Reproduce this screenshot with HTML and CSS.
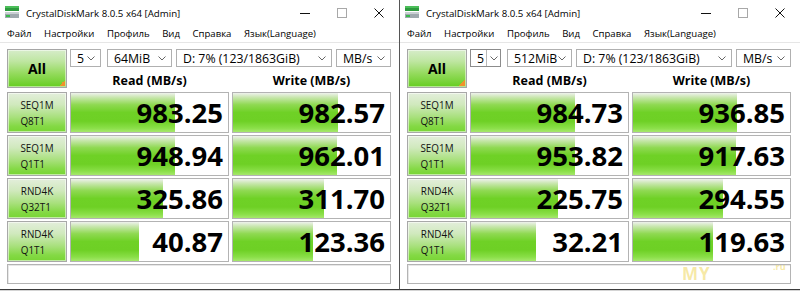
FILE: index.html
```html
<!DOCTYPE html>
<html lang="ru">
    <head>
        <meta charset="UTF-8">
        <title>CrystalDiskMark</title>
        <link rel="stylesheet" href="styles.css">
    </head>
    <body>
        <div class="window window-left">
            <div class="titlebar">
                <svg class="app-icon" width="14" height="12" viewBox="0 0 14 12">
                    <rect x="0" y="0" width="14" height="5" fill="#2e9a3e"/>
                    <rect x="0" y="0" width="14" height="2" fill="#4cbf5a"/>
                    <rect x="0" y="6" width="14" height="6" fill="#9fa9ae"/>
                    <rect x="0" y="6" width="14" height="2" fill="#c9d0d3"/>
                    <rect x="1" y="9" width="4" height="2" fill="#3cb84e"/>
                </svg>
                <span class="title">CrystalDiskMark 8.0.5 x64 [Admin]</span>
                <div class="caption">
                    <span class="cap-btn"><svg width="10" height="10" viewBox="0 0 10 10"><line x1="0" y1="5.5" x2="10" y2="5.5" stroke="#111"/></svg></span>
                    <span class="cap-btn"><svg width="10" height="10" viewBox="0 0 10 10"><rect x="0.5" y="0.5" width="9" height="9" fill="none" stroke="#a8a8a8"/></svg></span>
                    <span class="cap-btn"><svg width="10" height="10" viewBox="0 0 10 10"><path d="M0.5 0.5 L9.5 9.5 M9.5 0.5 L0.5 9.5" stroke="#111"/></svg></span>
                </div>
            </div>
            <div class="menubar">
                <span>Файл</span><span>Настройки</span><span>Профиль</span><span>Вид</span><span>Справка</span><span>Язык(Language)</span>
            </div>
            <div class="board">
                <div class="all-btn">All</div>
                <div class="selects">
                    <div class="combo combo-count">5<svg width="8" height="5" viewBox="0 0 8 5"><polyline points="0.5,0.5 4,4 7.5,0.5" fill="none" stroke="#666"/></svg></div>
                    <div class="combo combo-size">64MiB<svg width="8" height="5" viewBox="0 0 8 5"><polyline points="0.5,0.5 4,4 7.5,0.5" fill="none" stroke="#666"/></svg></div>
                    <div class="combo combo-drive">D: 7% (123/1863GiB)<svg width="8" height="5" viewBox="0 0 8 5"><polyline points="0.5,0.5 4,4 7.5,0.5" fill="none" stroke="#666"/></svg></div>
                    <div class="combo combo-unit">MB/s<svg width="8" height="5" viewBox="0 0 8 5"><polyline points="0.5,0.5 4,4 7.5,0.5" fill="none" stroke="#666"/></svg></div>
                </div>
                <div class="col-head">Read (MB/s)</div>
                <div class="col-head">Write (MB/s)</div>

                <div class="test-label">SEQ1M<br>Q8T1</div>
                <div class="meter"><div class="fill" style="width:104px"></div><span class="value">983.25</span></div>
                <div class="meter"><div class="fill" style="width:105px"></div><span class="value">982.57</span></div>

                <div class="test-label">SEQ1M<br>Q1T1</div>
                <div class="meter"><div class="fill" style="width:104px"></div><span class="value">948.94</span></div>
                <div class="meter"><div class="fill" style="width:104px"></div><span class="value">962.01</span></div>

                <div class="test-label">RND4K<br>Q32T1</div>
                <div class="meter"><div class="fill" style="width:92px"></div><span class="value">325.86</span></div>
                <div class="meter"><div class="fill" style="width:91px"></div><span class="value">311.70</span></div>

                <div class="test-label">RND4K<br>Q1T1</div>
                <div class="meter"><div class="fill" style="width:68px"></div><span class="value">40.87</span></div>
                <div class="meter"><div class="fill" style="width:80px"></div><span class="value">123.36</span></div>

                <div class="status"></div>
            </div>
        </div>

        <div class="window window-right">
            <div class="titlebar">
                <svg class="app-icon" width="14" height="12" viewBox="0 0 14 12">
                    <rect x="0" y="0" width="14" height="5" fill="#2e9a3e"/>
                    <rect x="0" y="0" width="14" height="2" fill="#4cbf5a"/>
                    <rect x="0" y="6" width="14" height="6" fill="#9fa9ae"/>
                    <rect x="0" y="6" width="14" height="2" fill="#c9d0d3"/>
                    <rect x="1" y="9" width="4" height="2" fill="#3cb84e"/>
                </svg>
                <span class="title">CrystalDiskMark 8.0.5 x64 [Admin]</span>
                <div class="caption">
                    <span class="cap-btn"><svg width="10" height="10" viewBox="0 0 10 10"><line x1="0" y1="5.5" x2="10" y2="5.5" stroke="#111"/></svg></span>
                    <span class="cap-btn"><svg width="10" height="10" viewBox="0 0 10 10"><rect x="0.5" y="0.5" width="9" height="9" fill="none" stroke="#a8a8a8"/></svg></span>
                    <span class="cap-btn"><svg width="10" height="10" viewBox="0 0 10 10"><path d="M0.5 0.5 L9.5 9.5 M9.5 0.5 L0.5 9.5" stroke="#111"/></svg></span>
                </div>
            </div>
            <div class="menubar">
                <span>Файл</span><span>Настройки</span><span>Профиль</span><span>Вид</span><span>Справка</span><span>Язык(Language)</span>
            </div>
            <div class="board">
                <div class="all-btn">All</div>
                <div class="selects">
                    <div class="combo combo-count hot">5<span class="drop"><svg width="8" height="5" viewBox="0 0 8 5"><polyline points="0.5,0.5 4,4 7.5,0.5" fill="none" stroke="#666"/></svg></span></div>
                    <div class="combo combo-size">512MiB<svg width="8" height="5" viewBox="0 0 8 5"><polyline points="0.5,0.5 4,4 7.5,0.5" fill="none" stroke="#666"/></svg></div>
                    <div class="combo combo-drive">D: 7% (123/1863GiB)<svg width="8" height="5" viewBox="0 0 8 5"><polyline points="0.5,0.5 4,4 7.5,0.5" fill="none" stroke="#666"/></svg></div>
                    <div class="combo combo-unit">MB/s<svg width="8" height="5" viewBox="0 0 8 5"><polyline points="0.5,0.5 4,4 7.5,0.5" fill="none" stroke="#666"/></svg></div>
                </div>
                <div class="col-head">Read (MB/s)</div>
                <div class="col-head">Write (MB/s)</div>

                <div class="test-label">SEQ1M<br>Q8T1</div>
                <div class="meter"><div class="fill" style="width:104px"></div><span class="value">984.73</span></div>
                <div class="meter"><div class="fill" style="width:104px"></div><span class="value">936.85</span></div>

                <div class="test-label">SEQ1M<br>Q1T1</div>
                <div class="meter"><div class="fill" style="width:104px"></div><span class="value">953.82</span></div>
                <div class="meter"><div class="fill" style="width:103px"></div><span class="value">917.63</span></div>

                <div class="test-label">RND4K<br>Q32T1</div>
                <div class="meter"><div class="fill" style="width:87px"></div><span class="value">225.75</span></div>
                <div class="meter"><div class="fill" style="width:90px"></div><span class="value">294.55</span></div>

                <div class="test-label">RND4K<br>Q1T1</div>
                <div class="meter"><div class="fill" style="width:65px"></div><span class="value">32.21</span></div>
                <div class="meter"><div class="fill" style="width:80px"></div><span class="value">119.63</span></div>

                <div class="status"></div>
            </div>
            <div class="watermark"><span class="wm-ru">.ru</span><span class="wm-my">MY</span></div>
        </div>
    </body>
</html>
```

FILE: styles.css
```css
body {
    margin: 0;
    width: 800px;
    height: 291px;
    overflow: hidden;
    display: flex;
    align-items: flex-start;
    background: #d4d4d4;
    font-family: 'Open Sans', 'Noto Sans', sans-serif;
    color: #000;
}
.window {
    box-sizing: border-box;
    height: 290px;
    background: #fff;
    border-bottom: 1px solid #3c3c3c;
    flex-shrink: 0;
}
.window-left {
    width: 399px;
}
.window-right {
    width: 401px;
    border-left: 1px solid #555;
    position: relative;
}
.titlebar {
    height: 24px;
    display: flex;
    align-items: center;
}
.app-icon {
    margin-left: 5px;
    flex-shrink: 0;
}
.title {
    margin-left: 7px;
    font-size: 9.7px;
    padding-top: 2px;
}
.caption {
    margin-left: auto;
    margin-right: 2px;
    display: flex;
    height: 24px;
}
.cap-btn {
    width: 37px;
    display: flex;
    align-items: center;
    justify-content: center;
    padding-top: 2px;
}
.menubar {
    height: 18px;
    display: flex;
    align-items: center;
    padding-left: 1px;
    border-bottom: 1px solid #e6e6e6;
    font-size: 9.6px;
}
.menubar span {
    padding: 0 6px;
    margin-right: 0.5px;
}
.board {
    display: grid;
    grid-template-columns: 60px 159px 159px;
    grid-template-rows: 18px 21px repeat(4, 41px) 20px;
    column-gap: 3px;
    row-gap: 2px;
    padding: 6px 7px 5px 7px;
}
.all-btn {
    grid-row: 1 / span 2;
    height: 39px;
    box-sizing: border-box;
    border: 1px solid #a6a6a6;
    box-shadow: inset 0 0 0 1px rgba(255, 255, 255, 0.5);
    background:
        linear-gradient(135deg, transparent 50%, #f0922b 50%) right 1px bottom 1px / 6px 6px no-repeat,
        linear-gradient(to bottom, #d6ecc9 0%, #bfe6a2 30%, #92da5a 65%, #66cd22 100%);
    display: flex;
    align-items: center;
    justify-content: center;
    font-weight: bold;
    font-size: 14px;
}
.selects {
    grid-column: 2 / span 2;
    display: flex;
}
.combo {
    box-sizing: border-box;
    height: 18px;
    border: 1px solid #b0b0b0;
    display: flex;
    align-items: center;
    justify-content: space-between;
    padding: 0 5px 0 6px;
    font-size: 12.3px;
    background: #fff;
}
.combo-count {
    width: 31px;
    margin-right: 6px;
}
.combo-size {
    width: 65px;
    margin-right: 4px;
}
.combo-drive {
    width: 156px;
    margin-right: 4px;
}
.combo-unit {
    width: 55px;
}
.combo.hot {
    padding-right: 0;
    border-color: #8c8c8c;
}
.combo.hot .drop {
    height: 100%;
    width: 13px;
    border-left: 1px solid #b8b8b8;
    display: flex;
    align-items: center;
    justify-content: center;
}
.col-head {
    display: flex;
    align-items: center;
    justify-content: center;
    padding-top: 2px;
    font-weight: bold;
    font-size: 12.5px;
}
.test-label {
    box-sizing: border-box;
    border: 1px solid #a8a8a8;
    box-shadow: inset 0 0 0 1px rgba(255, 255, 255, 0.55);
    background: linear-gradient(to bottom, #e3eedb 0%, #d0e9bd 30%, #a8e07c 62%, #84d945 85%, #78d534 100%);
    display: flex;
    flex-direction: column;
    align-items: center;
    justify-content: center;
    font-size: 9.9px;
    line-height: 16px;
    color: #111;
}
.meter {
    box-sizing: border-box;
    border: 1px solid #b3b3b3;
    background: #fff;
    display: grid;
}
.meter .fill,
.meter .value {
    grid-area: 1 / 1;
}
.fill {
    justify-self: start;
    background: linear-gradient(to bottom, #eef1ec 0%, #c6e6aa 12%, #8fd952 30%, #6fd126 50%, #6ed025 72%, #8adf48 90%, #a6e86c 100%);
}
.value {
    justify-self: end;
    align-self: center;
    padding-right: 5px;
    font-size: 27.5px;
    font-weight: bold;
    line-height: 1;
}
.status {
    grid-column: 1 / -1;
    box-sizing: border-box;
    border: 1px solid #b4b4b4;
    box-shadow: inset 1px 1px 0 #e8e8e8;
    background: #fff;
}
.watermark {
    position: absolute;
    left: 282px;
    top: 262px;
    width: 110px;
    height: 22px;
    font-weight: bold;
    color: rgba(238, 212, 80, 0.5);
}
.wm-my {
    position: absolute;
    left: 0;
    top: 3px;
    font-size: 17px;
    line-height: 1;
    letter-spacing: 1px;
}
.wm-ru {
    position: absolute;
    left: 91px;
    top: 0;
    font-size: 9px;
    line-height: 1;
}
```
